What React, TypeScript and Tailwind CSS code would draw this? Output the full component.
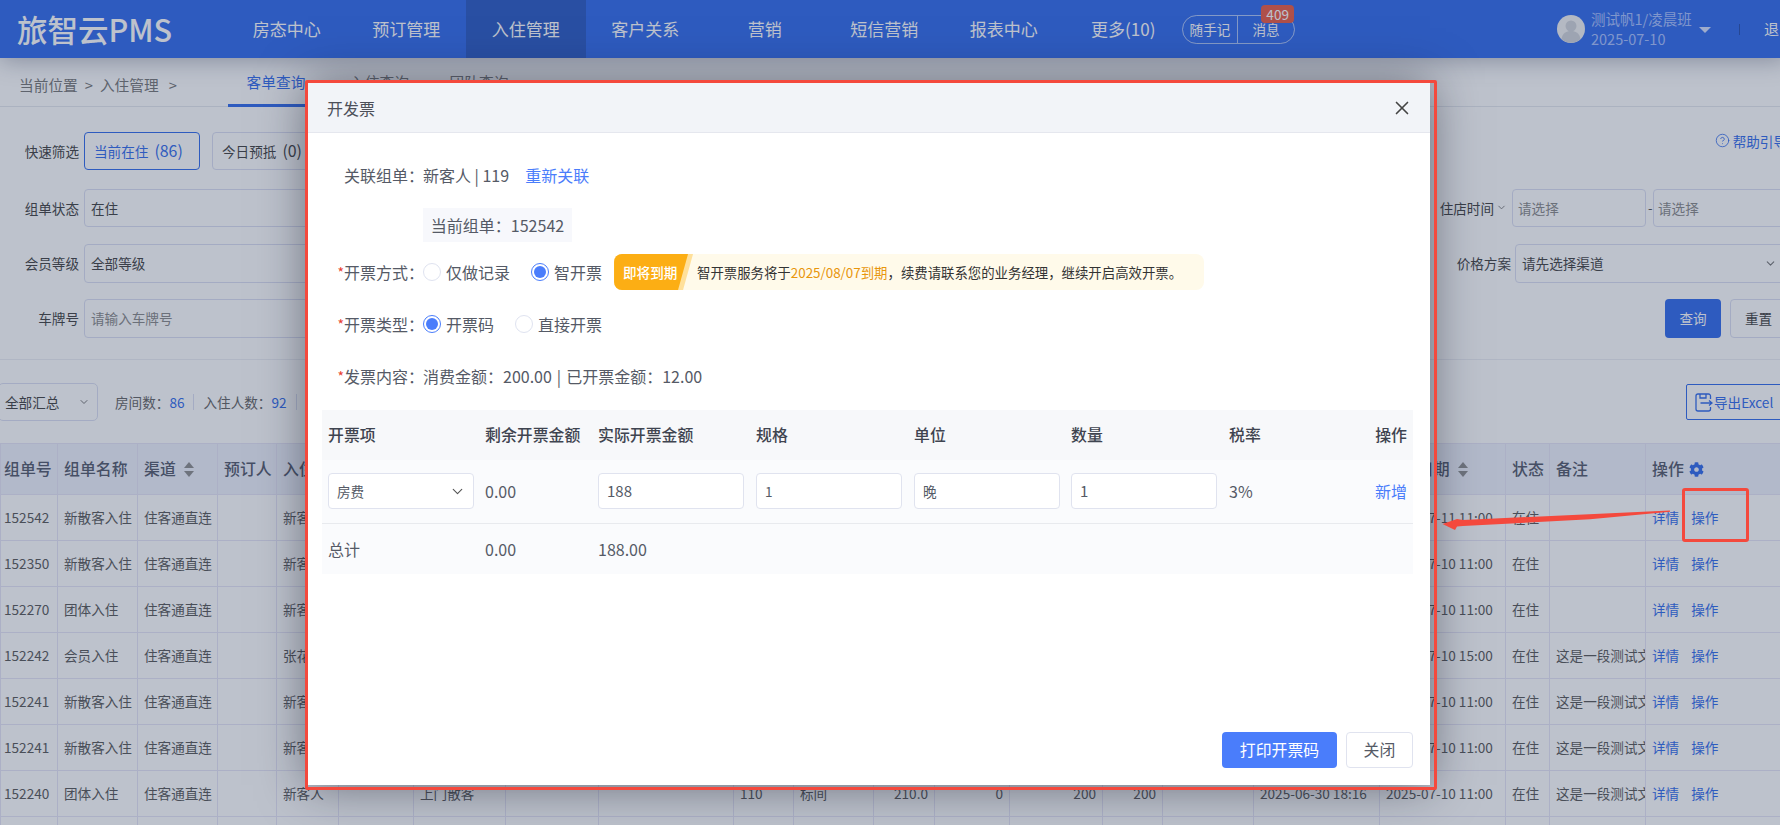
import { ChevronDown, CircleHelp, X } from "lucide-react";
import { FaCog } from "react-icons/fa";
import type { ReactNode } from "react";

const nav = ["房态中心", "预订管理", "入住管理", "客户关系", "营销", "短信营销", "报表中心", "更多(10)"];

const colWidths = ["w-[57px]", "w-[80px]", "w-[80px]", "w-[59px]", "w-[62px]", "w-[75px]", "w-[92px]", "w-[93px]", "w-[135px]", "w-[60px]", "w-[80px]", "w-[61px]", "w-[75px]", "w-[93px]", "w-[60px]", "w-[91px]", "w-[126px]", "w-[126px]", "w-[44px]", "w-[96px]", "w-[135px]"];

const heads = ["组单号", "组单名称", "渠道", "预订人", "入住人", "", "", "", "", "", "", "", "", "", "", "", "", "离店日期", "状态", "备注", "操作"];

const remark = "这是一段测试文字";
const rows = [
  { id: "152542", name: "新散客入住", guest: "新客人", out: "2025-07-11 11:00", note: "" },
  { id: "152350", name: "新散客入住", guest: "新客人", out: "2025-07-10 11:00", note: "" },
  { id: "152270", name: "团体入住", guest: "新客人", out: "2025-07-10 11:00", note: "" },
  { id: "152242", name: "会员入住", guest: "张花花", out: "2025-07-10 15:00", note: remark },
  { id: "152241", name: "新散客入住", guest: "新客人", out: "2025-07-10 11:00", note: remark },
  { id: "152241", name: "新散客入住", guest: "新客人", out: "2025-07-10 11:00", note: remark },
  { id: "152240", name: "团体入住", guest: "新客人", out: "2025-07-10 11:00", note: remark },
];

function Sort() {
  return (
    <svg width="10" height="15" viewBox="0 0 10 15" className="ml-[8px] inline-block align-[-2px] text-[#8f8f8f]" fill="currentColor">
      <path d="M5 0 10 6H0Z" />
      <path d="M5 15 0 9h10Z" />
    </svg>
  );
}

function Field({ children, className }: { children: ReactNode; className: string }) {
  return (
    <div className={"flex items-center rounded-[4px] border border-[#dcdff2] px-[6px] text-[13.6px] text-[#444] " + className}>
      {children}
    </div>
  );
}

function Label({ children }: { children: ReactNode }) {
  return <span className="w-[79px] shrink-0 text-right text-[13.6px] text-[#444]">{children}</span>;
}

function Radio({ on, label, className }: { on?: boolean; label: string; className?: string }) {
  return (
    <span className={"flex items-center " + (className ?? "")}>
      {on ? (
        <span className="flex h-[18px] w-[18px] items-center justify-center rounded-full border border-[#4a7dfb]">
          <span className="h-[12px] w-[12px] rounded-full bg-[#4a7dfb]" />
        </span>
      ) : (
        <span className="h-[18px] w-[18px] rounded-full border border-[#dfe3f0]" />
      )}
      <span className="ml-[5px] text-[16px] text-[#555a66]">{label}</span>
    </span>
  );
}

function FormLabel({ star, children }: { star?: boolean; children: ReactNode }) {
  return (
    <>
      <span className="w-[36px] shrink-0 text-right text-[14px] text-[#e8412f]">{star ? "*" : ""}</span>
      <span className="w-[79px] shrink-0 whitespace-nowrap text-[16px] text-[#555a66]">{children}</span>
    </>
  );
}

function Header() {
  return (
    <header className="flex h-[58px] w-[1787px] items-center bg-[#336cec] text-white shadow-[0_2px_24px_rgba(20,30,60,0.35)]">
      <div className="w-[227px] shrink-0 pl-[17px] text-[30.5px] font-medium leading-none">旅智云PMS</div>
      {nav.map((item, i) => (
        <div key={item} className={"flex h-full w-[119.5px] shrink-0 items-center justify-center text-[17px] " + (i === 2 ? "bg-[#2c5bc4]" : "")}>
          {item}
        </div>
      ))}
      <div className="relative -ml-[1px] flex h-[29px] w-[113px] shrink-0 items-center rounded-full border border-white/60 text-[13.6px]">
        <span className="w-[55px] border-r border-white/60 text-center leading-[27px]">随手记</span>
        <span className="flex-1 text-center">消息</span>
        <span className="absolute -top-[11px] right-0 rounded-[4px] bg-[#eb5c45] px-[5px] text-[13.6px] leading-[18px]">409</span>
      </div>
      <svg width="28" height="28" viewBox="0 0 28 28" className="ml-[262px] shrink-0">
        <circle cx="14" cy="14" r="14" fill="#f2f2f2" />
        <circle cx="14" cy="11" r="5.5" fill="#d2d4da" />
        <path d="M4.5 24c1-6 5-8 9.500-8s8.500 2 9.500 8a14 14 0 0 1-19 0Z" fill="#d2d4da" />
      </svg>
      <div className="ml-[6px] w-[108px] shrink-0 text-[14.5px] leading-[20px] text-[#a8c0ff]">
        <div>测试帆1/凌晨班</div>
        <div>2025-07-10</div>
      </div>
      <svg width="12" height="6" viewBox="0 0 12 6" className="mt-[2px] shrink-0 text-[#d5e0ff]" fill="currentColor">
        <path d="M0 0h12L6 6Z" />
      </svg>
      <span className="ml-[28px] h-[11px] w-px shrink-0 bg-[#274fae]" />
      <span className="ml-[24px] shrink-0 text-[15px]">退出</span>
    </header>
  );
}

function Breadcrumb() {
  return (
    <div className="flex h-[49px] w-[1787px] border-b border-[#e6e8ee]">
      <div className="flex w-[228px] items-center pl-[19px] pt-[6px] text-[14.7px] text-[#777]">
        当前位置<span className="mx-[7px]">&gt;</span>入住管理<span className="ml-[10px]">&gt;</span>
      </div>
      <div className="h-[49px] w-[96px] border-b-[3px] border-[#336cec] pt-[14px] text-center text-[14.7px] leading-[20px] text-[#336cec]">客单查询</div>
      <div className="ml-[9px] w-[93px] pt-[14px] text-center text-[14.7px] leading-[20px] text-[#777]">入住查询</div>
      <div className="ml-[5px] w-[96px] pt-[14px] text-center text-[14.7px] leading-[20px] text-[#777]">团队查询</div>
    </div>
  );
}

function Filters() {
  return (
    <section className="h-[253px] w-[1787px] border-b border-[#eceef4] pt-[25px]">
      <div className="flex h-[38px] items-center">
        <Label>快速筛选</Label>
        <div className="ml-[5px] flex h-full w-[116px] items-center rounded-[4px] border border-[#336cec] pl-[9px] text-[13.6px] text-[#336cec]">
          当前在住<span className="ml-[6px] text-[15.9px]">(86)</span>
        </div>
        <div className="ml-[12px] flex h-full w-[116px] items-center rounded-[4px] border border-[#dcdff2] pl-[9px] text-[13.6px] text-[#444]">
          今日预抵<span className="ml-[6px] text-[15.9px]">(0)</span>
        </div>
        <div className="-mt-[20px] ml-auto flex items-center text-[13.6px] text-[#336cec]">
          <CircleHelp size={15} strokeWidth={1.3} className="mr-[3px]" />
          帮助引导
        </div>
      </div>
      <div className="mt-[19px] flex h-[38px] items-center">
        <Label>组单状态</Label>
        <Field className="ml-[5px] h-full w-[300px]">在住</Field>
        <span className="ml-auto flex items-center text-[13.6px] text-[#444]">
          住店时间
          <ChevronDown size={11} className="ml-[2px] mr-[5px] text-[#777]" />
        </span>
        <Field className="h-full w-[134px] !px-[5px] !text-[#8a8a8a]">请选择</Field>
        <span className="mx-[2px] w-[3px] text-[13px] text-[#555]">-</span>
        <Field className="h-full w-[134px] !px-[4px] !text-[#8a8a8a]">请选择</Field>
      </div>
      <div className="mt-[17px] flex h-[39px] items-center">
        <Label>会员等级</Label>
        <Field className="ml-[5px] h-full w-[300px]">全部等级</Field>
        <span className="ml-auto mr-[4px] text-[13.6px] text-[#444]">价格方案</span>
        <Field className="h-full w-[272px] justify-between pr-[8px]">
          请先选择渠道
          <ChevronDown size={13} className="mr-[1px] text-[#777]" />
        </Field>
      </div>
      <div className="mt-[16px] flex h-[39px] items-center">
        <Label>车牌号</Label>
        <Field className="ml-[5px] h-full w-[300px] !text-[#8a8a8a]">请输入车牌号</Field>
        <button className="ml-auto h-full w-[56px] rounded-[4px] bg-[#336cec] text-[13.6px] text-white">查询</button>
        <button className="ml-[9px] h-full w-[57px] rounded-[4px] border border-[#dcdff2] text-[13.6px] text-[#444]">重置</button>
      </div>
    </section>
  );
}

function Stats() {
  return (
    <div className="flex w-[1787px] items-center pb-[22px] pt-[23px]">
      <div className="-ml-[2px] flex h-[38px] w-[100px] items-center justify-between rounded-[5px] border border-[#dcdff2] pl-[6px] pr-[7px] text-[13.6px] text-[#444]">
        全部汇总
        <ChevronDown size={12} className="text-[#777]" />
      </div>
      <span className="ml-[17px] text-[13.6px] text-[#666]">房间数：<span className="text-[#336cec]">86</span></span>
      <span className="ml-[9px] h-[16px] w-px bg-[#dcdff2]" />
      <span className="ml-[9px] text-[13.6px] text-[#666]">入住人数：<span className="text-[#336cec]">92</span></span>
      <span className="ml-[9px] h-[16px] w-px bg-[#dcdff2]" />
      <div className="ml-auto flex h-[36px] w-[101px] items-center rounded-[2px] border border-[#336cec] pl-[8px] text-[13.6px] text-[#336cec]">
        <svg width="18" height="19" viewBox="0 0 18 19" fill="none" stroke="currentColor" strokeWidth="1.3" className="mr-[1px] shrink-0">
          <path d="M15.500 6V3a2 2 0 0 0-2-2H3a2 2 0 0 0-2 2v13a2 2 0 0 0 2 2h10.500a2 2 0 0 0 2-2v-2" />
          <path d="M5 1v4h6V1" />
          <path d="M5.500 10h11M14 7.500l3 2.500-3 2.500" />
        </svg>
        导出Excel
      </div>
    </div>
  );
}

function OrderTable() {
  const td = "overflow-hidden whitespace-nowrap border border-[#e7e6f6] px-[6px] text-[13.6px] text-[#5a5a5a]";
  return (
    <table className="w-[1780px] table-fixed border-collapse">
      <colgroup>
        {colWidths.map((w, i) => (
          <col key={i} className={w} />
        ))}
      </colgroup>
      <thead>
        <tr className="h-[51px] bg-[#eff2fd]">
          {heads.map((h, i) => (
            <th key={i} className={"overflow-hidden whitespace-nowrap border border-[#e7e6f6] text-left text-[15.9px] font-medium text-[#555b6c] " + (i === 0 ? "px-[3px]" : "px-[6px]")}>
              {h}
              {(i === 2 || i === 17) && <Sort />}
              {i === 20 && <FaCog size={15} className="ml-[5px] inline-block align-[-2px] text-[#336cec]" />}
            </th>
          ))}
        </tr>
      </thead>
      <tbody>
        {rows.map((r, n) => (
          <tr key={n} className="h-[46px]">
            <td className={td + " !px-[3px]"}>{r.id}</td>
            <td className={td}>{r.name}</td>
            <td className={td}>住客通直连</td>
            <td className={td} />
            <td className={td}>{r.guest}</td>
            <td className={td} />
            <td className={td}>上门散客</td>
            <td className={td} />
            <td className={td} />
            <td className={td}>110</td>
            <td className={td}>标间</td>
            <td className={td + " text-right"}>210.0</td>
            <td className={td + " text-right"}>0</td>
            <td className={td + " text-right"}>200</td>
            <td className={td + " text-right"}>200</td>
            <td className={td} />
            <td className={td}>2025-06-30 18:16</td>
            <td className={td}>{r.out}</td>
            <td className={td}>在住</td>
            <td className={td}>{r.note}</td>
            <td className={td + " text-[#336cec]"}>
              详情<span className="ml-[12px]">操作</span>
            </td>
          </tr>
        ))}
        <tr className="h-[46px]">
          {colWidths.map((_, i) => (
            <td key={i} className={td} />
          ))}
        </tr>
      </tbody>
    </table>
  );
}

function InvoiceModal() {
  const inputBox = "flex h-[36px] w-[146px] items-center rounded-[4px] border border-[#e0e3ef] bg-white px-[8px] text-[#555a66]";
  const cols = ["w-[157px]", "w-[113px]", "w-[158px]", "w-[158px]", "w-[157px]", "w-[158px]", "w-[190px]"];
  const tableHeads = ["开票项", "剩余开票金额", "实际开票金额", "规格", "单位", "数量"];
  return (
    <div className="absolute left-[308px] top-[83px] flex h-[702px] w-[1122px] flex-col bg-white shadow-[0_0_45px_rgba(15,20,35,0.5)]">
      <div className="flex h-[50px] shrink-0 items-center justify-between border-b border-[#e5e7ee] bg-[#f2f4f8] pl-[19px] pr-[17px]">
        <span className="text-[16px] text-[#4c4f58]">开发票</span>
        <X size={22} strokeWidth={1.8} className="text-[#444]" />
      </div>

      <div className="mt-[30px] flex h-[24px] items-center text-[16px] text-[#555a66]">
        <FormLabel>关联组单：</FormLabel>
        <span>新客人 | 119</span>
        <span className="ml-[16px] text-[#4a7dfb]">重新关联</span>
      </div>

      <div className="ml-[115px] mt-[21px] flex h-[34px] w-[149px] items-center justify-center bg-[#f7f8fc] text-[16px] text-[#555a66]">当前组单：152542</div>

      <div className="mt-[12px] flex h-[36px] items-center">
        <FormLabel star>开票方式：</FormLabel>
        <Radio label="仅做记录" />
        <Radio on label="智开票" className="ml-[21px]" />
        <div className="relative ml-[12px] flex h-[36px] w-[590px] items-center overflow-hidden rounded-[8px] bg-[#fffaea] text-[13.4px] text-[#333]">
          <div className="absolute left-0 top-0 h-full w-[79px] bg-[#ffe09a] [clip-path:polygon(0_0,100%_0,calc(100%-10px)_100%,0_100%)]" />
          <div className="absolute left-0 top-0 flex h-full w-[74px] items-center bg-[#fcae14] pl-[9px] text-[13.6px] font-medium text-white [clip-path:polygon(0_0,100%_0,calc(100%-10px)_100%,0_100%)]">即将到期</div>
          <span className="ml-[83px]">
            智开票服务将于<span className="text-[#e8960c]">2025/08/07到期</span>，续费请联系您的业务经理，继续开启高效开票。
          </span>
        </div>
      </div>

      <div className="mt-[22px] flex h-[24px] items-center">
        <FormLabel star>开票类型：</FormLabel>
        <Radio on label="开票码" />
        <Radio label="直接开票" className="ml-[21px]" />
      </div>

      <div className="mt-[28px] flex h-[24px] items-center">
        <FormLabel star>发票内容：</FormLabel>
        <span className="text-[16px] text-[#555a66]">
          消费金额：200.00<span className="mx-[5px]">|</span>已开票金额：12.00
        </span>
      </div>

      <table className="ml-[14px] mt-[22px] w-[1091px] table-fixed border-collapse text-[16px] text-[#555a66]">
        <colgroup>
          {cols.map((w, i) => (
            <col key={i} className={w} />
          ))}
        </colgroup>
        <thead>
          <tr className="h-[50px] bg-[#f7f8fa] text-left">
            {tableHeads.map((h) => (
              <th key={h} className="px-[6px] text-[15.9px] font-medium text-[#3f4450]">{h}</th>
            ))}
            <th className="px-[6px] text-[15.9px] font-medium text-[#3f4450]">
              <div className="flex justify-between">
                <span>税率</span>
                <span>操作</span>
              </div>
            </th>
          </tr>
        </thead>
        <tbody>
          <tr className="h-[63px] border-b border-[#e8eaee] bg-[#fafbfd]">
            <td className="px-[6px]">
              <div className={inputBox + " justify-between text-[13.6px]"}>
                房费
                <ChevronDown size={17} strokeWidth={1.6} className="-mr-[1px] text-[#555]" />
              </div>
            </td>
            <td className="px-[6px]">0.00</td>
            <td className="px-[6px]">
              <div className={inputBox + " text-[15px]"}>188</div>
            </td>
            <td className="px-[6px]">
              <div className={inputBox + " text-[13.6px]"}>1</div>
            </td>
            <td className="px-[6px]">
              <div className={inputBox + " text-[13.6px]"}>晚</div>
            </td>
            <td className="px-[6px]">
              <div className={inputBox + " text-[15px]"}>1</div>
            </td>
            <td className="px-[6px]">
              <div className="flex justify-between">
                <span>3%</span>
                <span className="text-[#4a7dfb]">新增</span>
              </div>
            </td>
          </tr>
          <tr className="h-[51px] bg-[#fafbfd]">
            <td className="px-[6px]">总计</td>
            <td className="px-[6px]">0.00</td>
            <td className="px-[6px]">188.00</td>
            <td colSpan={4} />
          </tr>
        </tbody>
      </table>

      <div className="mt-auto flex justify-end gap-[9px] pb-[17px] pr-[17px]">
        <button className="h-[36px] w-[115px] rounded-[4px] bg-[#4a7dfb] text-[15.9px] text-white">打印开票码</button>
        <button className="h-[36px] w-[67px] rounded-[4px] border border-[#e0e3ef] bg-white text-[15.9px] text-[#555a66]">关闭</button>
      </div>
    </div>
  );
}

export default function App() {
  return (
    <div className="relative h-[825px] w-[1780px] overflow-hidden bg-white font-['Noto_Sans_CJK_SC',sans-serif]">
      <Header />
      <Breadcrumb />
      <Filters />
      <Stats />
      <OrderTable />

      <div className="absolute inset-0 bg-[rgba(38,52,85,0.3)]" />
      <InvoiceModal />

      {/* annotation marks drawn on top of the screenshot */}
      <div className="absolute left-[305px] top-[80px] h-[710px] w-[1132px] rounded-[2px] border-[3px] border-[#f4493d]" />
      <div className="absolute left-[1682px] top-[488px] h-[54px] w-[67px] rounded-[3px] border-[3px] border-[#f4493d]" />
      <svg className="absolute left-0 top-0 h-[825px] w-[1780px]" viewBox="0 0 1780 825" fill="#f4493d">
        <path d="M1670 510.500 1463 520 1457 519 1442.500 524 1455 530 1457 526.500 1463 526 1590 519.300 1670 511.700Z" />
      </svg>
    </div>
  );
}
